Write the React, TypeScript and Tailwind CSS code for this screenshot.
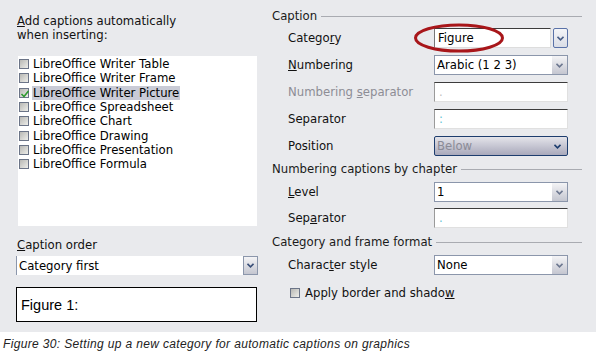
import React from "react";

const font = { fontFamily: '"DejaVu Sans", sans-serif' };

function Chevron({ color = "#2a3f66" }: { color?: string }) {
  return (
    <svg width="7" height="5" viewBox="0 0 7 5">
      <path d="M0.5 0.8 L3.5 3.8 L6.5 0.8" fill="none" stroke={color} strokeWidth="1.6" />
    </svg>
  );
}

function Check({ checked = false }: { checked?: boolean }) {
  return (
    <span className="relative inline-block w-[10px] h-[10px] shrink-0 border border-[#6b7487] bg-gradient-to-br from-[#b8b8b4] to-[#eeeeea]">
      {checked && (
        <svg className="absolute left-0 top-0" width="10" height="10" viewBox="0 0 10 10">
          <path d="M1.5 5 L4 7.5 L8.5 2" fill="none" stroke="#2f9a2f" strokeWidth="1.6" />
        </svg>
      )}
    </span>
  );
}

function Dropdown({ value, disabled = false, w = "w-[134px]" }: { value: string; disabled?: boolean; w?: string }) {
  if (disabled) {
    return (
      <div className={`${w} h-[20px] flex items-center justify-between px-[2px] rounded-[2px] border border-[#1d3d6e] bg-gradient-to-b from-[#e4e4ea] to-[#a9a9bb]`}>
        <span className="text-[#8b8b96]">{value}</span>
        <span className="pr-[4px]"><Chevron color="#1d3d6e" /></span>
      </div>
    );
  }
  return (
    <div className={`${w} h-[20px] flex border border-[#8b96ab] bg-white`}>
      <div className="flex-1 flex items-center px-[2px] text-black">{value}</div>
      <div className="w-[15px] flex items-center justify-center bg-gradient-to-b from-[#f4f4f6] to-[#c4c6d0]">
        <Chevron color="#6d7890" />
      </div>
    </div>
  );
}

function TextBox({ value, muted = false }: { value: string; muted?: boolean }) {
  return (
    <div className="w-[134px] h-[20px] flex items-center px-[4px] bg-white border border-t-[#3c3c3c] border-l-[#9a9a9a] border-r-[#e0e0e0] border-b-[#e0e0e0]">
      <span className={muted ? "text-[#c0c0c0]" : "text-[#66c4d6]"}>{value}</span>
    </div>
  );
}

function Heading({ text }: { text: string }) {
  return (
    <div className="flex items-center gap-[4px] h-[14px]">
      <span className="text-[#1a1a1a] whitespace-nowrap">{text}</span>
      <div className="flex-1 h-px bg-[#a9abb1]" />
    </div>
  );
}

function Row({ label, children, muted = false }: { label: React.ReactNode; children: React.ReactNode; muted?: boolean }) {
  return (
    <div className="flex items-center pl-[16px] h-[20px]">
      <span className={`w-[146px] ${muted ? "text-[#8d8d95]" : "text-[#111]"}`}>{label}</span>
      {children}
    </div>
  );
}

const items = [
  "LibreOffice Writer Table",
  "LibreOffice Writer Frame",
  "LibreOffice Writer Picture",
  "LibreOffice Spreadsheet",
  "LibreOffice Chart",
  "LibreOffice Drawing",
  "LibreOffice Presentation",
  "LibreOffice Formula",
];

export default function App() {
  return (
    <div className="w-[596px] h-[361px] bg-white overflow-hidden text-[11.7px] leading-[14px]" style={font}>
      <div className="h-[332px] bg-[#e9eaed] flex">
        {/* left column */}
        <div className="w-[265px] pl-[16px] pt-[14px] flex flex-col">
          <div className="pl-[1px] text-[#111]">
            <span className="underline">A</span>dd captions automatically
            <br />
            when inserting:
          </div>
          <div className="mt-[14px] ml-[2px] w-[239px] h-[170px] bg-white pt-[1px] pl-[1px]">
            {items.map((it, i) => (
              <div key={it} className="flex items-center gap-[3px] h-[14.3px]">
                <Check checked={i === 2} />
                <span className={`px-[1px] text-black ${i === 2 ? "bg-[#c9cbd6]" : ""}`}>{it}</span>
              </div>
            ))}
          </div>
          <div className="mt-[12px] pl-[1px] text-[#111]">
            <span className="underline">C</span>aption order
          </div>
          <div className="mt-[4px]">
            <div className="w-[242px] h-[19px] flex bg-white border-l border-[#8b96ab]">
              <div className="flex-1 flex items-center px-[2px] text-black">Category first</div>
              <div className="w-[15px] flex items-center justify-center border border-[#8b96ab] bg-gradient-to-b from-[#f4f4f6] to-[#c4c6d0]">
                <Chevron color="#3a4f78" />
              </div>
            </div>
          </div>
          <div
            className="mt-[12px] w-[241px] h-[35px] border border-black bg-white flex items-center pl-[4px] pt-[1px] text-[14.5px] text-black"
            style={{ fontFamily: '"Liberation Sans", Arial, sans-serif' }}
          >
            Figure 1:
          </div>
        </div>

        {/* right column */}
        <div className="flex-1 pl-[7px] pr-[14px] pt-[9px] flex flex-col">
          <Heading text="Caption" />
          <div className="mt-[5px] flex flex-col gap-[7px]">
            <Row label={<>Catego<span className="underline">r</span>y</>}>
              <div className="relative flex gap-[2px]">
                <div className="w-[117px] h-[20px] flex items-center px-[3px] bg-white border border-t-[#3c3c3c] border-l-[#777] border-r-[#ddd] border-b-[#ddd] text-black">
                  Figure
                </div>
                <div className="w-[15px] h-[20px] rounded-[2px] flex items-center justify-center border border-[#5a72a8] bg-gradient-to-b from-[#f4f5f8] to-[#dadde6]">
                  <Chevron color="#4a5f88" />
                </div>
                <svg className="absolute left-[-21px] top-[-6px]" width="92" height="32" viewBox="0 0 92 32">
                  <ellipse cx="46" cy="16" rx="43.5" ry="13" fill="none" stroke="#a8161a" strokeWidth="3" />
                </svg>
              </div>
            </Row>
            <Row label={<><span className="underline">N</span>umbering</>}>
              <Dropdown value="Arabic (1 2 3)" />
            </Row>
            <Row muted label={<>Numbering <span className="underline">s</span>eparator</>}>
              <TextBox value="." muted />
            </Row>
            <Row label="Separator">
              <TextBox value=":" />
            </Row>
            <Row label="Position">
              <Dropdown value="Below" disabled />
            </Row>
          </div>
          <div className="mt-[6px]">
            <Heading text="Numbering captions by chapter" />
          </div>
          <div className="mt-[6px] flex flex-col gap-[6px]">
            <Row label={<><span className="underline">L</span>evel</>}>
              <Dropdown value="1" />
            </Row>
            <Row label={<>Sep<span className="underline">a</span>rator</>}>
              <TextBox value="." />
            </Row>
          </div>
          <div className="mt-[7px]">
            <Heading text="Category and frame format" />
          </div>
          <div className="mt-[6px]">
            <Row label={<>Charac<span className="underline">t</span>er style</>}>
              <Dropdown value="None" />
            </Row>
          </div>
          <div className="mt-[11px] pl-[18px] flex items-center gap-[5px] h-[14px] text-[#111]">
            <Check />
            <span>
              Apply border and shado<span className="underline">w</span>
            </span>
          </div>
        </div>
      </div>
      <div
        className="pl-[3px] pt-[5px] text-[12px] italic text-[#222] tracking-[0.35px]"
        style={{ fontFamily: '"Liberation Sans", Arial, sans-serif' }}
      >
        Figure 30: Setting up a new category for automatic captions on graphics
      </div>
    </div>
  );
}
